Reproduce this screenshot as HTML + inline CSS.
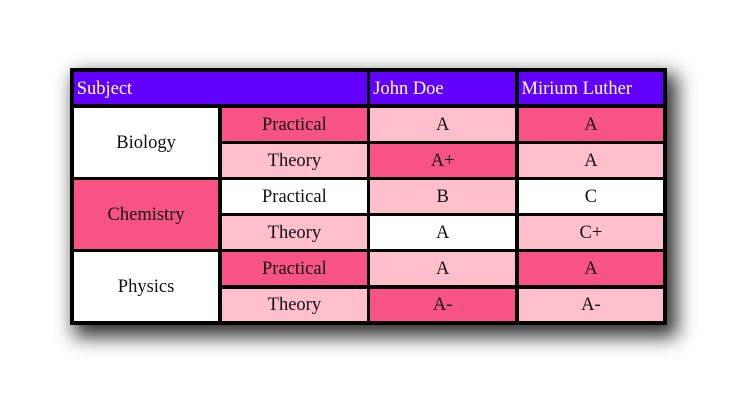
<!DOCTYPE html>
<html><head><style>
body{margin:0;width:733px;height:417px;background:#fff;overflow:hidden;font-family:"Liberation Serif",serif;}
.t{position:absolute;left:70px;top:68px;width:597px;height:257px;box-sizing:border-box;background:#000;padding:3.7px;display:grid;grid-template-columns:repeat(4,1fr);grid-template-rows:repeat(7,1fr);gap:3.5px;box-shadow:7px 9px 18px 3px rgba(0,0,0,.8);}
.t div{display:flex;align-items:center;justify-content:center;font-size:18.5px;color:#111;padding-top:2px;box-sizing:border-box;}
.h{background:#6200ff;color:#fff!important;justify-content:flex-start!important;padding-left:3px;}
.w{background:#fff}.d{background:#f75385}.l{background:#ffc0cb}
</style></head><body>
<div class="t">
<div class="h" style="grid-column:1/3">Subject</div><div class="h">John Doe</div><div class="h">Mirium Luther</div>
<div class="w" style="grid-row:span 2">Biology</div><div class="d">Practical</div><div class="l">A</div><div class="d">A</div>
<div class="l">Theory</div><div class="d">A+</div><div class="l">A</div>
<div class="d" style="grid-row:span 2">Chemistry</div><div class="w">Practical</div><div class="l">B</div><div class="w">C</div>
<div class="l">Theory</div><div class="w">A</div><div class="l">C+</div>
<div class="w" style="grid-row:span 2">Physics</div><div class="d">Practical</div><div class="l">A</div><div class="d">A</div>
<div class="l">Theory</div><div class="d">A-</div><div class="l">A-</div>
</div>
</body></html>
